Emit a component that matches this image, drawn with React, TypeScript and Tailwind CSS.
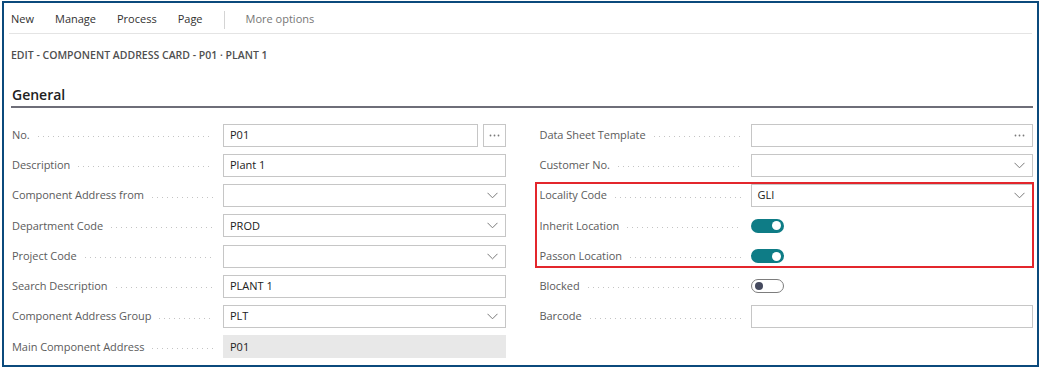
const FONT = "font-['Open_Sans','Noto_Sans',sans-serif]";

type Field =
  | { label: string; kind: "text"; value?: string; ellipsis?: boolean }
  | { label: string; kind: "lookup"; value?: string }
  | { label: string; kind: "select"; value?: string }
  | { label: string; kind: "readonly"; value: string }
  | { label: string; kind: "toggle"; on: boolean };

const leftFields: Field[] = [
  { label: "No.", kind: "text", value: "P01", ellipsis: true },
  { label: "Description", kind: "text", value: "Plant 1" },
  { label: "Component Address from", kind: "select" },
  { label: "Department Code", kind: "select", value: "PROD" },
  { label: "Project Code", kind: "select" },
  { label: "Search Description", kind: "text", value: "PLANT 1" },
  { label: "Component Address Group", kind: "select", value: "PLT" },
  { label: "Main Component Address", kind: "readonly", value: "P01" },
];

const rightFields: Field[] = [
  { label: "Data Sheet Template", kind: "lookup" },
  { label: "Customer No.", kind: "select" },
  { label: "Locality Code", kind: "select", value: "GLI" },
  { label: "Inherit Location", kind: "toggle", on: true },
  { label: "Passon Location", kind: "toggle", on: true },
  { label: "Blocked", kind: "toggle", on: false },
  { label: "Barcode", kind: "text" },
];

function Chevron() {
  return (
    <svg width="11" height="7" viewBox="0 0 11 7" className="shrink-0">
      <path d="M0.5 0.8 L5.5 5.8 L10.5 0.8" fill="none" stroke="#7a7a7a" strokeWidth="1" />
    </svg>
  );
}

function Dots() {
  return (
    <svg width="11" height="3" viewBox="0 0 11 3" className="shrink-0">
      <circle cx="1.5" cy="1.5" r="0.9" fill="#7a7a7a" />
      <circle cx="5.5" cy="1.5" r="0.9" fill="#7a7a7a" />
      <circle cx="9.5" cy="1.5" r="0.9" fill="#7a7a7a" />
    </svg>
  );
}

function Toggle({ on }: { on: boolean }) {
  if (on) {
    return (
      <div className="flex h-[14px] w-[33px] items-center justify-end rounded-full bg-[#0e7c86] pr-[3px]">
        <div className="h-[9px] w-[9px] rounded-full bg-white" />
      </div>
    );
  }
  return (
    <div className="flex h-[14px] w-[33px] items-center rounded-full border border-[#7d7d7d] bg-white pl-[3px]">
      <div className="h-[8px] w-[8px] rounded-full bg-[#454a5e]" />
    </div>
  );
}

function Control({ field }: { field: Field }) {
  const box = "flex h-[23px] items-center border border-[#c6c6c6] bg-white pl-[6px] pr-[7px] text-[11px] text-[#212121]";
  switch (field.kind) {
    case "toggle":
      return <Toggle on={field.on} />;
    case "readonly":
      return (
        <div className="flex h-[23px] items-center bg-[#e8e8e8] pl-[7px] text-[11px] text-[#212121]">
          {field.value}
        </div>
      );
    case "select":
      return (
        <div className={box}>
          <span className="flex-1">{field.value}</span>
          <Chevron />
        </div>
      );
    case "lookup":
      return (
        <div className={box}>
          <span className="flex-1">{field.value}</span>
          <Dots />
        </div>
      );
    default:
      if (field.ellipsis) {
        return (
          <div className="flex gap-[5px]">
            <div className={box + " flex-1"}>{field.value}</div>
            <div className="flex h-[23px] w-[23px] items-center justify-center border border-[#c6c6c6]">
              <Dots />
            </div>
          </div>
        );
      }
      return <div className={box}>{field.value}</div>;
  }
}

function Row({ field }: { field: Field }) {
  return (
    <div className="flex h-[30.25px] items-center">
      <div className="flex w-[211px] items-center pr-[10px]">
        <span className="whitespace-nowrap text-[11px] tracking-[-0.05px] text-[#5b5b5b]">{field.label}</span>
        <span className="ml-[8px] mt-[3px] h-[1px] flex-1 bg-[linear-gradient(to_right,#c4c4c4_1px,transparent_1px)] bg-[length:5px_1px]" />
      </div>
      <div className="flex-1">
        <Control field={field} />
      </div>
    </div>
  );
}

export default function App() {
  return (
    <div className={`h-[371px] w-[1043px] overflow-hidden bg-white ${FONT}`}>
      <div className="ml-[2px] mt-[1px] flex h-[366px] w-[1037px] flex-col border-2 border-[#0b4a7c]">
        <div className="mx-[5px] flex h-[31px] items-center gap-[21px] border-b border-[#e4e4e4] pl-[2px] pt-[3px] text-[11px] text-[#323130]">
          <span>New</span>
          <span>Manage</span>
          <span>Process</span>
          <span>Page</span>
          <span className="h-[18px] w-px bg-[#d4d4d4]" />
          <span className="text-[#767676]">More options</span>
        </div>

        <div className="flex h-[44px] items-center pl-[7px] text-[10.5px] font-semibold text-[#4f4f4f]">
          EDIT - COMPONENT ADDRESS CARD - P01 · PLANT 1
        </div>

        <div className="ml-[7px] mr-[4px] flex h-[30px] items-center border-b-2 border-[#6e6e78] pl-[1px] pt-[5px] text-[14px] font-semibold text-[#212121]">
          General
        </div>

        <div className="mt-[12px] grid grid-cols-2 gap-x-[34px] pl-[8px] pr-[4px]">
          <div className="flex flex-col">
            {leftFields.map((f) => (
              <Row key={f.label} field={f} />
            ))}
          </div>
          <div className="relative flex flex-col">
            {rightFields.map((f) => (
              <Row key={f.label} field={f} />
            ))}
            <div className="pointer-events-none absolute left-[-5px] right-[-1px] top-[62px] h-[86px] border-2 border-[#e3262c]" />
          </div>
        </div>
      </div>
    </div>
  );
}
